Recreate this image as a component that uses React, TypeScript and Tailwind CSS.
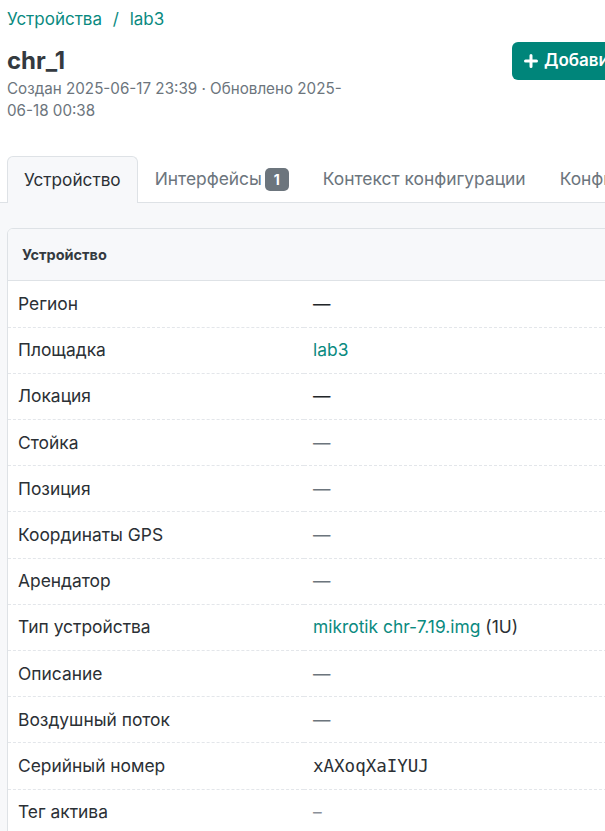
import React from 'react';

type Row = {
  label: string;
  value: React.ReactNode;
};

const Dash = ({ muted }: { muted?: boolean }) => (
  <span className={muted ? 'text-[#6c757d]' : 'text-[#212529]'}>—</span>
);

const rows: Row[] = [
  { label: 'Регион', value: <Dash /> },
  { label: 'Площадка', value: <span className="text-[#0a8a80]">lab3</span> },
  { label: 'Локация', value: <Dash /> },
  { label: 'Стойка', value: <Dash muted /> },
  { label: 'Позиция', value: <Dash muted /> },
  { label: 'Координаты GPS', value: <Dash muted /> },
  { label: 'Арендатор', value: <Dash muted /> },
  {
    label: 'Тип устройства',
    value: (
      <span>
        <span className="text-[#0a8a80]">mikrotik chr-7.19.img</span> (1U)
      </span>
    ),
  },
  { label: 'Описание', value: <Dash muted /> },
  { label: 'Воздушный поток', value: <Dash muted /> },
  {
    label: 'Серийный номер',
    value: (
      <span className="font-['DejaVu_Sans_Mono',monospace] text-[17.5px]">xAXoqXaIYUJ</span>
    ),
  },
  { label: 'Тег актива', value: <span className="text-[#8a9099]">–</span> },
];

const tabs = ['Устройство', 'Интерфейсы', 'Контекст конфигурации', 'Конфигурация'];

export default function App() {
  return (
    <div className="w-[605px] h-[831px] overflow-hidden bg-white font-['Inter',sans-serif] text-[#2b3035]">
      <div className="w-[900px]">
        {/* Header */}
        <div className="px-[7px] pt-[7px]">
          <div className="text-[17px] leading-6 text-[#0a8a80]">
            Устройства <span className="mx-1.5">/</span> lab3
          </div>
          <div className="flex items-start">
            <div className="w-[505px]">
              <h1 className="mt-[14px] text-2xl leading-8 font-bold text-[#343a40]">chr_1</h1>
              <div className="mt-[1px] w-[340px] text-[15.2px] leading-[22px] text-[#6c757d]">
                Создан 2025-06-17 23:39 · Обновлено 2025-06-18 00:38
              </div>
            </div>
            <button className="mt-[11px] flex h-[38px] items-center gap-1.5 rounded-md bg-[#00857a] px-3 text-[17px] font-semibold text-white whitespace-nowrap">
              <svg width="14" height="14" viewBox="0 0 14 14">
                <path d="M7 1.5v11M1.5 7h11" stroke="white" strokeWidth="3" strokeLinecap="round" />
              </svg>
              Добавить компоненты
            </button>
          </div>
        </div>

        {/* Tabs */}
        <div className="mt-[34px] flex border-b border-[#dee2e6] px-[7px]">
          {tabs.map((t, i) => (
            <div
              key={t}
              className={
                i === 0
                  ? 'mb-[-1px] flex h-[47px] items-center rounded-t-md border border-b-0 border-[#dee2e6] bg-[#f7f8fa] px-4 text-[17.2px] text-[#2b3035]'
                  : 'flex h-[46px] items-center border border-transparent px-4 text-[17.4px] text-[#6c757d]'
              }
            >
              {t}
              {i === 1 && (
                <span className="ml-[3px] flex h-[23px] w-6 items-center justify-center rounded-[5px] bg-[#6c757d] text-[14px] font-bold text-white">
                  1
                </span>
              )}
            </div>
          ))}
        </div>

        {/* Content */}
        <div className="bg-[#f7f8fa] px-[7px] pt-[25px] pb-10">
          <div className="overflow-hidden rounded-md border border-[#dee2e6] bg-white">
            <div className="flex h-[52px] items-center border-b border-[#dee2e6] bg-[#f7f8fa] px-[14px] text-[14.5px] font-bold text-[#343a40]">
              Устройство
            </div>
            <table className="w-full border-collapse">
              <tbody>
                {rows.map((r) => (
                  <tr key={r.label}>
                    <td className="h-[46.2px] w-[296px] border-b border-dashed border-[#e3e6ea] px-[10px] text-[17.4px]">
                      {r.label}
                    </td>
                    <td className="h-[46.2px] border-b border-dashed border-[#e3e6ea] px-[9px] text-[17.4px]">
                      {r.value}
                    </td>
                  </tr>
                ))}
              </tbody>
            </table>
          </div>
        </div>
      </div>
    </div>
  );
}
